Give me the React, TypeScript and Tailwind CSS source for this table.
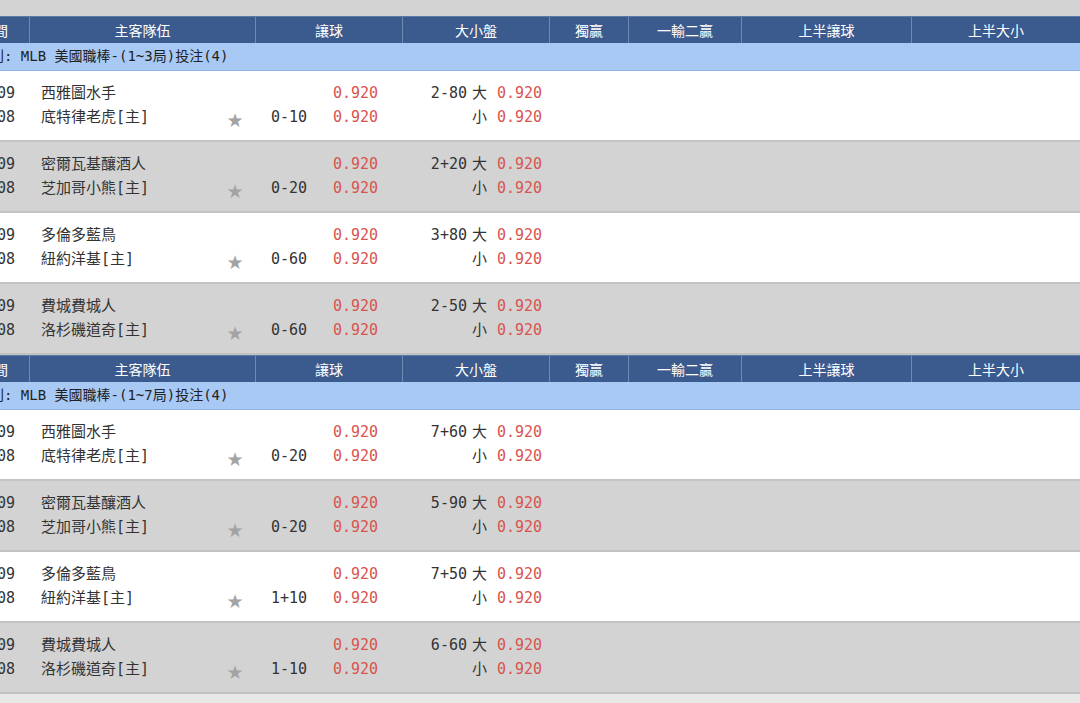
import { Fragment } from 'react';

const mono = 'font-["DejaVu_Sans_Mono","Noto_Sans_CJK_TC",monospace]';

type Match = {
  away: string;
  home: string;
  hdp: string;
  ou: string;
};

const sections: { title: string; matches: Match[] }[] = [
  {
    title: '(1~3局)',
    matches: [
      { away: '西雅圖水手', home: '底特律老虎', hdp: '0-10', ou: '2-80' },
      { away: '密爾瓦基釀酒人', home: '芝加哥小熊', hdp: '0-20', ou: '2+20' },
      { away: '多倫多藍鳥', home: '紐約洋基', hdp: '0-60', ou: '3+80' },
      { away: '費城費城人', home: '洛杉磯道奇', hdp: '0-60', ou: '2-50' },
    ],
  },
  {
    title: '(1~7局)',
    matches: [
      { away: '西雅圖水手', home: '底特律老虎', hdp: '0-20', ou: '7+60' },
      { away: '密爾瓦基釀酒人', home: '芝加哥小熊', hdp: '0-20', ou: '5-90' },
      { away: '多倫多藍鳥', home: '紐約洋基', hdp: '1+10', ou: '7+50' },
      { away: '費城費城人', home: '洛杉磯道奇', hdp: '1-10', ou: '6-60' },
    ],
  },
];

function HeaderRow() {
  const cell = 'flex items-center justify-center border-l border-[#7089b3]';
  return (
    <div className='flex h-[27px] bg-[#3b5a8e] text-[14px] text-white border-t border-[#5f7aa6] font-["Noto_Sans_CJK_TC",sans-serif]'>
      <div className="w-[69px] flex items-center justify-end pr-[21px]">時間</div>
      <div className={`${cell} w-[226px]`}>主客隊伍</div>
      <div className={`${cell} w-[147px]`}>讓球</div>
      <div className={`${cell} w-[147px]`}>大小盤</div>
      <div className={`${cell} w-[79px]`}>獨贏</div>
      <div className={`${cell} w-[113px]`}>一輸二贏</div>
      <div className={`${cell} w-[170px]`}>上半讓球</div>
      <div className={`${cell} w-[169px]`}>上半大小</div>
    </div>
  );
}

function MatchRow({ m, gray }: { m: Match; gray: boolean }) {
  return (
    <div
      className={`flex h-[71px] border-b-2 border-[#c3c3c3] pt-[10px] text-[15px] leading-[24px] text-[#333] ${mono} ${
        gray ? 'bg-[#d3d3d3]' : 'bg-white'
      }`}
    >
      {/* time */}
      <div className="w-[69px] pl-[10px] flex flex-col">
        <span>06-09</span>
        <span>07:08</span>
      </div>
      {/* teams */}
      <div className="w-[226px] pl-[12px] flex">
        <div className="flex-1 flex flex-col">
          <span>{m.away}</span>
          <span>{m.home}[主]</span>
        </div>
        <div className="w-[40px] flex flex-col items-center">
          <span>&nbsp;</span>
          <span className='text-[19px] text-[#a3a3a3] translate-y-[3px] font-["DejaVu_Sans",sans-serif]'>★</span>
        </div>
      </div>
      {/* handicap */}
      <div className="w-[147px] flex">
        <div className="w-[78px] pl-[16px] flex flex-col">
          <span>&nbsp;</span>
          <span>{m.hdp}</span>
        </div>
        <div className="flex flex-col text-[#d9534f]">
          <span>0.920</span>
          <span>0.920</span>
        </div>
      </div>
      {/* over / under */}
      <div className="w-[147px] flex">
        <div className="w-[85px] flex flex-col items-end">
          <span>
            {m.ou}
            <span className="ml-[5px]">大</span>
          </span>
          <span>小</span>
        </div>
        <div className="pl-[10px] flex flex-col text-[#d9534f]">
          <span>0.920</span>
          <span>0.920</span>
        </div>
      </div>
      <div className="flex-1" />
    </div>
  );
}

export default function App() {
  return (
    <div className="w-[1080px] h-[703px] overflow-hidden bg-[#e8e8e8]">
      <div className="h-[16px] bg-[#d2d2d2]" />
      <div className="w-[1120px] -ml-[40px]">
        {sections.map((s, si) => (
          <Fragment key={si}>
            <HeaderRow />
            <div
              className={`h-[28px] flex items-center pl-[16px] bg-[#a8c9f4] border-b border-[#8fb2e6] text-[14px] text-[#222] ${mono}`}
            >
              類別: MLB 美國職棒-{s.title}投注(4)
            </div>
            {s.matches.map((m, i) => (
              <MatchRow key={i} m={m} gray={i % 2 === 1} />
            ))}
          </Fragment>
        ))}
      </div>
    </div>
  );
}
